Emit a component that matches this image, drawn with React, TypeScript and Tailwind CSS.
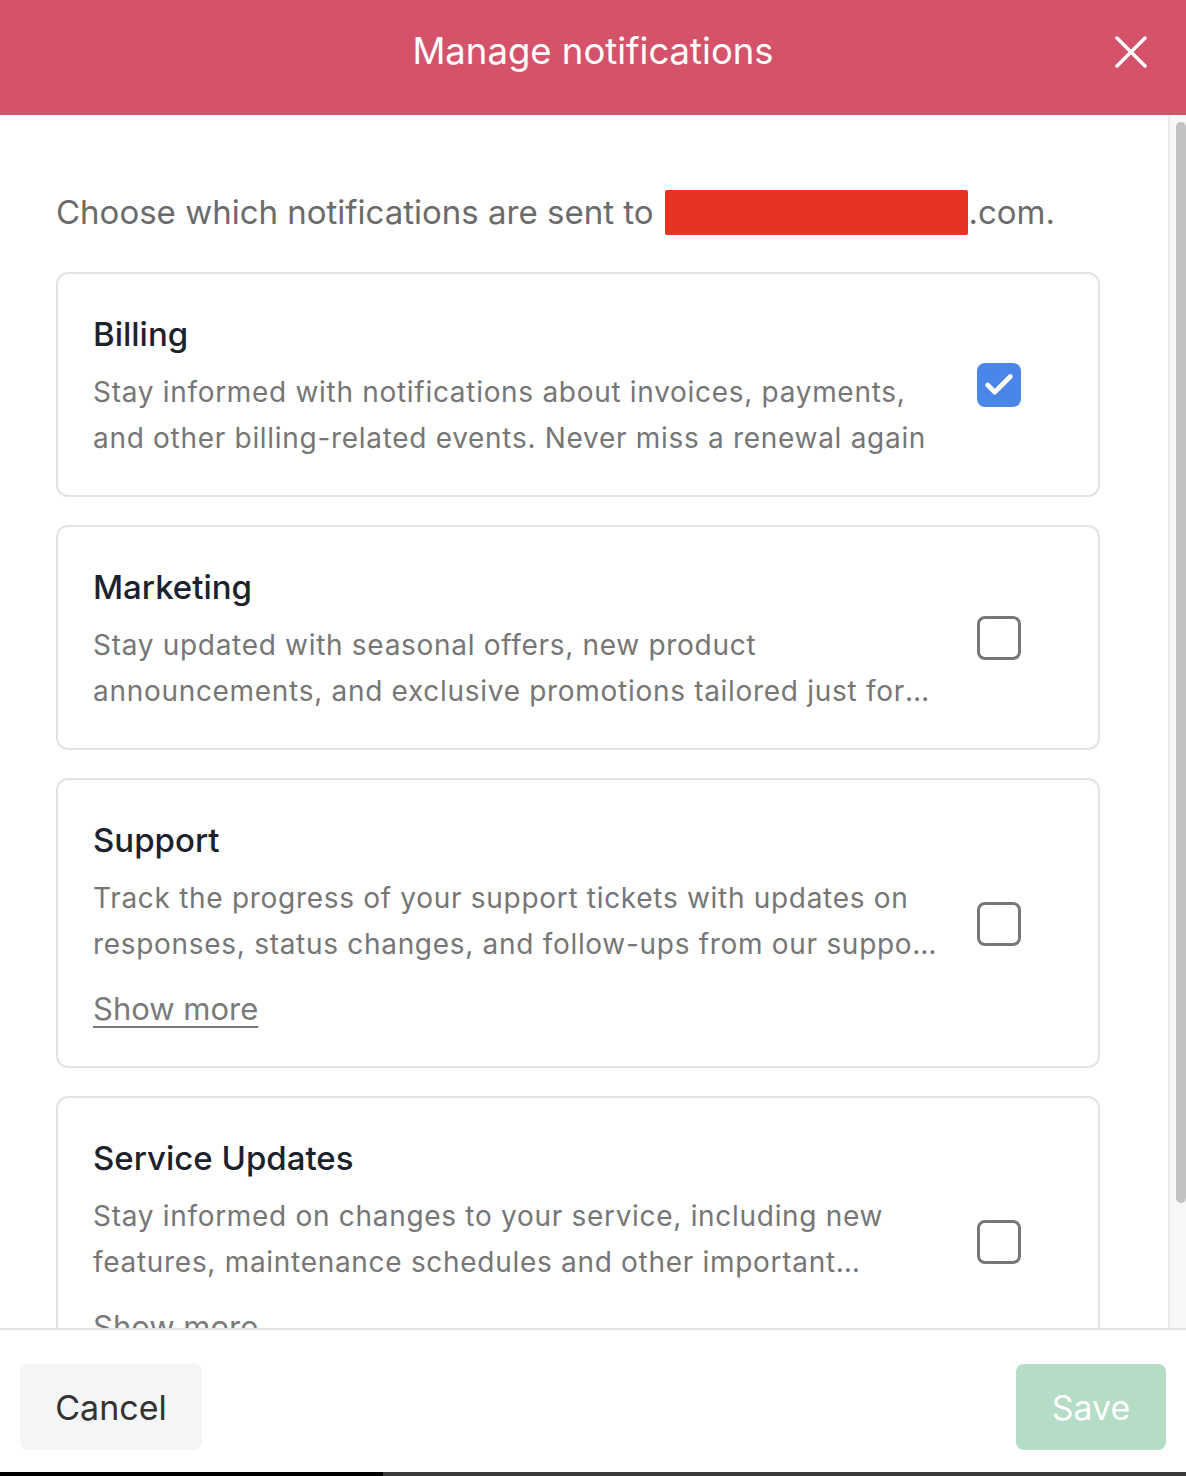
import { Check, X } from "lucide-react";

interface Topic {
  title: string;
  description: string;
  checked: boolean;
  showMore?: boolean;
}

const TOPICS: Topic[] = [
  {
    title: "Billing",
    description:
      "Stay informed with notifications about invoices, payments, and other billing-related events. Never miss a renewal again",
    checked: true,
  },
  {
    title: "Marketing",
    description:
      "Stay updated with seasonal offers, new product announcements, and exclusive promotions tailored just for you and your team.",
    checked: false,
  },
  {
    title: "Support",
    description:
      "Track the progress of your support tickets with updates on responses, status changes, and follow-ups from our support team.",
    checked: false,
    showMore: true,
  },
  {
    title: "Service Updates",
    description:
      "Stay informed on changes to your service, including new features, maintenance schedules and other important announcements.",
    checked: false,
    showMore: true,
  },
];

function Box({ checked }: { checked: boolean }) {
  if (checked) {
    return (
      <div className="flex h-[44px] w-[44px] shrink-0 items-center justify-center rounded-[8px] bg-[#4a86e8]">
        <Check className="h-[34px] w-[34px] text-white" strokeWidth={3.4} />
      </div>
    );
  }
  return <div className="h-[44px] w-[44px] shrink-0 rounded-[8px] border-[3px] border-[#777777] bg-white" />;
}

function TopicCard({ topic }: { topic: Topic }) {
  return (
    <div className="flex shrink-0 items-center rounded-[12px] border-2 border-[#e3e3e3] bg-white pb-[34px] pl-[35px] pt-[35px]">
      <div className="w-[852px]">
        <h3 className="text-[33px] font-medium leading-[50px] text-[#1c222c]">{topic.title}</h3>
        <p className="mt-[10px] line-clamp-2 text-[28px] leading-[46px] tracking-[0.7px] text-[#767676]">
          {topic.description}
        </p>
        {topic.showMore && (
          <button className="mt-[19px] text-[31px] leading-[46px] text-[#7a7a7a] underline decoration-2 underline-offset-[6px]">
            Show more
          </button>
        )}
      </div>
      <div className="ml-[32px]">
        <Box checked={topic.checked} />
      </div>
    </div>
  );
}

export default function App() {
  return (
    <div className="flex h-[1476px] w-full flex-col overflow-hidden bg-white font-['Inter',sans-serif]">
      <header className="relative flex h-[115px] shrink-0 items-center justify-center bg-[#d5536a] pb-[12px]">
        <h1 className="text-[36.5px] font-normal text-white">Manage notifications</h1>
        <button className="absolute right-[27px] top-[24px] text-white" aria-label="Close">
          <X className="h-[56px] w-[56px]" strokeWidth={1.5} />
        </button>
      </header>

      <div className="flex min-h-0 flex-1">
        <div className="flex min-w-0 flex-1 flex-col overflow-hidden pl-[56px] pr-[68px] pt-[73px]">
          <p className="flex items-center text-[33px] leading-[48px] text-[#6b6b6b]">
            Choose which notifications are sent to
            <span className="ml-[12px] inline-block h-[45px] w-[303px] rounded-[2px] bg-[#e83323]" />
            .com.
          </p>
          <div className="mt-[36px] flex flex-col gap-[28px]">
            {TOPICS.map((t) => (
              <TopicCard key={t.title} topic={t} />
            ))}
          </div>
        </div>
        {/* scrollbar */}
        <div className="w-[18px] shrink-0 border-l-2 border-[#ececec] bg-[#f7f7f7] pl-[6px] pt-[7px]">
          <div className="h-[1081px] w-[10px] rounded-[6px] bg-[#c1c1c1]" />
        </div>
      </div>

      <footer className="flex h-[144px] shrink-0 items-start justify-between border-t-2 border-[#e4e4e4] px-[20px] pt-[34px]">
        <button className="h-[86px] w-[182px] rounded-[8px] bg-[#f4f5f7] text-[34px] text-[#333333]">Cancel</button>
        <button className="h-[86px] w-[150px] rounded-[8px] bg-[#b5dcc4] text-[34px] text-white">Save</button>
      </footer>
      <div className="flex h-[4px] shrink-0">
        <div className="w-[383px] bg-black" />
        <div className="flex-1 bg-[#3a3a3a]" />
      </div>
    </div>
  );
}
